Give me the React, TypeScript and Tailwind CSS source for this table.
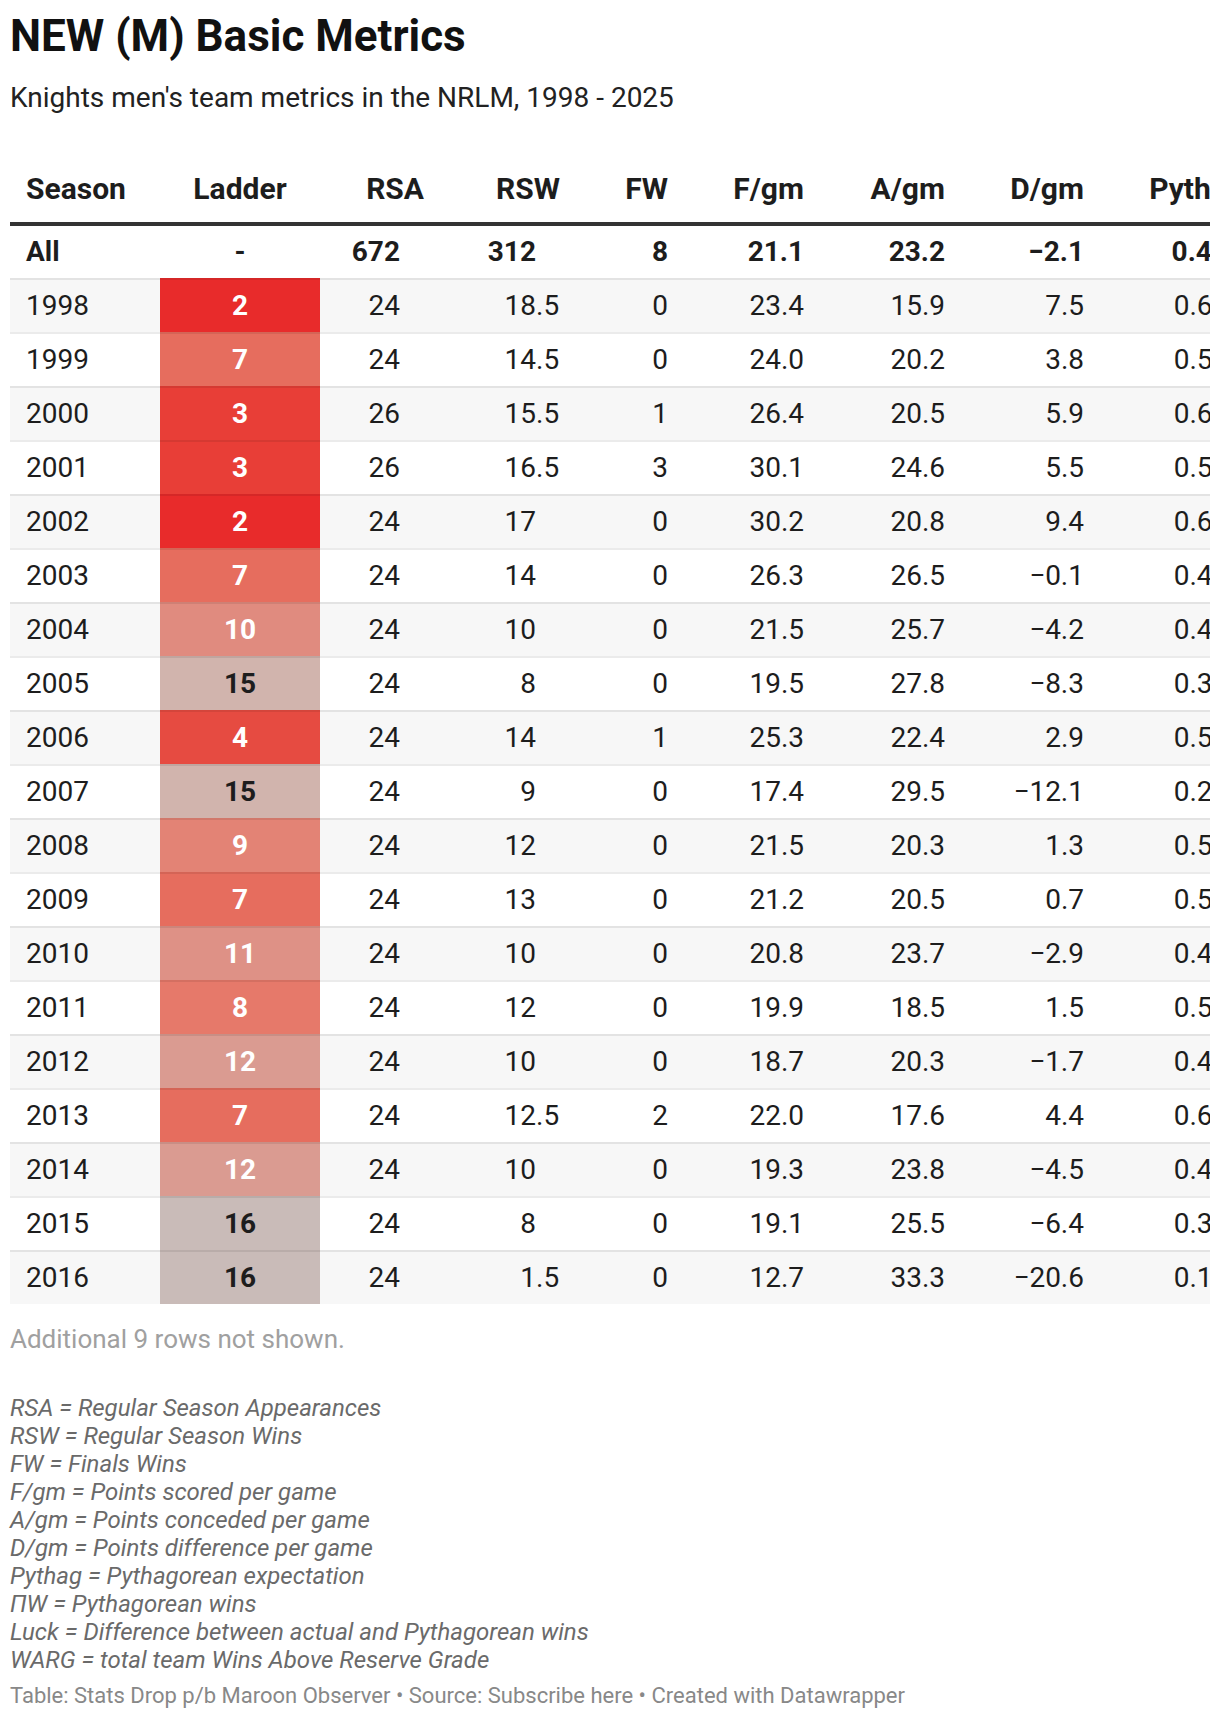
const rows: [string, number, number, string, number, string, string, string, string][] = [
  ['1998', 2, 24, '18.5', 0, '23.4', '15.9', '7.5', '0.685'],
  ['1999', 7, 24, '14.5', 0, '24.0', '20.2', '3.8', '0.588'],
  ['2000', 3, 26, '15.5', 1, '26.4', '20.5', '5.9', '0.620'],
  ['2001', 3, 26, '16.5', 3, '30.1', '24.6', '5.5', '0.589'],
  ['2002', 2, 24, '17', 0, '30.2', '20.8', '9.4', '0.677'],
  ['2003', 7, 24, '14', 0, '26.3', '26.5', '−0.1', '0.497'],
  ['2004', 10, 24, '10', 0, '21.5', '25.7', '−4.2', '0.413'],
  ['2005', 15, 24, '8', 0, '19.5', '27.8', '−8.3', '0.346'],
  ['2006', 4, 24, '14', 1, '25.3', '22.4', '2.9', '0.561'],
  ['2007', 15, 24, '9', 0, '17.4', '29.5', '−12.1', '0.266'],
  ['2008', 9, 24, '12', 0, '21.5', '20.3', '1.3', '0.529'],
  ['2009', 7, 24, '13', 0, '21.2', '20.5', '0.7', '0.516'],
  ['2010', 11, 24, '10', 0, '20.8', '23.7', '−2.9', '0.437'],
  ['2011', 8, 24, '12', 0, '19.9', '18.5', '1.5', '0.535'],
  ['2012', 12, 24, '10', 0, '18.7', '20.3', '−1.7', '0.460'],
  ['2013', 7, 24, '12.5', 2, '22.0', '17.6', '4.4', '0.609'],
  ['2014', 12, 24, '10', 0, '19.3', '23.8', '−4.5', '0.403'],
  ['2015', 16, 24, '8', 0, '19.1', '25.5', '−6.4', '0.375'],
  ['2016', 16, 24, '1.5', 0, '12.7', '33.3', '−20.6', '0.131'],
];

const ladderBg: Record<number, string> = {
  2: 'bg-[#e82b2b] text-white',
  3: 'bg-[#e83e37] text-white',
  4: 'bg-[#e64b41] text-white',
  7: 'bg-[#e66d5e] text-white',
  8: 'bg-[#e6796a] text-white',
  9: 'bg-[#e38375] text-white',
  10: 'bg-[#e08b7f] text-white',
  11: 'bg-[#de9186] text-white',
  12: 'bg-[#da9b91] text-white',
  15: 'bg-[#d1b4ad] text-[#1d1d1d]',
  16: 'bg-[#c9bbb8] text-[#1d1d1d]',
};

const notes = [
  'RSA = Regular Season Appearances',
  'RSW = Regular Season Wins',
  'FW = Finals Wins',
  'F/gm = Points scored per game',
  'A/gm = Points conceded per game',
  'D/gm = Points difference per game',
  'Pythag = Pythagorean expectation',
  'ΠW = Pythagorean wins',
  'Luck = Difference between actual and Pythagorean wins',
  'WARG = total team Wins Above Reserve Grade',
];

// decimal-aligned value for the RSW column
function Dec({ v }: { v: string }) {
  const [int, frac] = v.split('.');
  return (
    <>
      <span>{int}</span>
      <span className="inline-block w-[24px] text-left">{frac ? `.${frac}` : ''}</span>
    </>
  );
}

const cell = 'flex h-[52px] shrink-0 items-center';

export default function App() {
  return (
    <div className="min-h-[1720px] bg-white px-[10px] font-[Roboto,sans-serif] text-[#1d1d1d]">
      <h1 className="pt-[10px] text-[44px] font-bold leading-[52px] text-[#111]">
        NEW (M) Basic Metrics
      </h1>
      <p className="mt-[18px] text-[28px] leading-[36px] text-[#222]">
        Knights men's team metrics in the NRLM, 1998 - 2025
      </p>

      <div className="mt-[39px] overflow-hidden">
        {/* header */}
        <div className="flex w-max border-b-4 border-[#333] pb-[15px] pt-[16px] text-[30px] font-bold leading-[36px]">
          <div className="w-[150px] shrink-0 pl-[16px]">Season</div>
          <div className="w-[160px] shrink-0 text-center">Ladder</div>
          <div className="w-[120px] shrink-0 pr-[16px] text-right">RSA</div>
          <div className="w-[136px] shrink-0 pr-[16px] text-right">RSW</div>
          <div className="w-[108px] shrink-0 pr-[16px] text-right">FW</div>
          <div className="w-[136px] shrink-0 pr-[16px] text-right">F/gm</div>
          <div className="w-[141px] shrink-0 pr-[16px] text-right">A/gm</div>
          <div className="w-[139px] shrink-0 pr-[16px] text-right">D/gm</div>
          <div className="w-[160px] shrink-0 pr-[16px] text-right">Pythag</div>
        </div>

        {/* totals */}
        <div className="flex w-max text-[28px] font-bold leading-[28px]">
          <div className={`${cell} w-[150px] pl-[16px]`}>All</div>
          <div className={`${cell} w-[160px] justify-center`}>-</div>
          <div className={`${cell} w-[120px] justify-end pr-[40px]`}>672</div>
          <div className={`${cell} w-[136px] justify-end pr-[16px]`}>
            <Dec v="312" />
          </div>
          <div className={`${cell} w-[108px] justify-end pr-[16px]`}>8</div>
          <div className={`${cell} w-[136px] justify-end pr-[16px]`}>21.1</div>
          <div className={`${cell} w-[141px] justify-end pr-[16px]`}>23.2</div>
          <div className={`${cell} w-[139px] justify-end pr-[16px]`}>−2.1</div>
          <div className={`${cell} w-[160px] justify-end pr-[16px]`}>0.455</div>
        </div>

        {rows.map(([season, ladder, rsa, rsw, fw, f, a, d, pyth], i) => (
          <div
            key={season}
            className={`flex w-max text-[28px] leading-[28px] [&>div]:h-[54px] [&>div]:border-t-2 [&>div]:border-black/[0.08] ${
              i % 2 === 0 ? 'bg-[#f7f7f7]' : 'bg-white'
            }`}
          >
            <div className={`${cell} w-[150px] pl-[16px]`}>{season}</div>
            <div className={`${cell} w-[160px] justify-center font-bold ${ladderBg[ladder]}`}>
              {ladder}
            </div>
            <div className={`${cell} w-[120px] justify-end pr-[40px]`}>{rsa}</div>
            <div className={`${cell} w-[136px] justify-end pr-[16px]`}>
              <Dec v={rsw} />
            </div>
            <div className={`${cell} w-[108px] justify-end pr-[16px]`}>{fw}</div>
            <div className={`${cell} w-[136px] justify-end pr-[16px]`}>{f}</div>
            <div className={`${cell} w-[141px] justify-end pr-[16px]`}>{a}</div>
            <div className={`${cell} w-[139px] justify-end pr-[16px]`}>{d}</div>
            <div className={`${cell} w-[160px] justify-end pr-[16px]`}>{pyth}</div>
          </div>
        ))}
      </div>

      <p className="mt-[19px] text-[26px] leading-[32px] text-[#a0a0a0]">
        Additional 9 rows not shown.
      </p>

      <div className="mt-[39px] text-[24px] italic leading-[28px] text-[#6a6a6a]">
        {notes.map((n) => (
          <div key={n}>{n}</div>
        ))}
      </div>

      <p className="mt-[8px] text-[22px] leading-[28px] text-[#888]">
        Table: Stats Drop p/b Maroon Observer • Source: Subscribe here • Created with Datawrapper
      </p>
    </div>
  );
}
